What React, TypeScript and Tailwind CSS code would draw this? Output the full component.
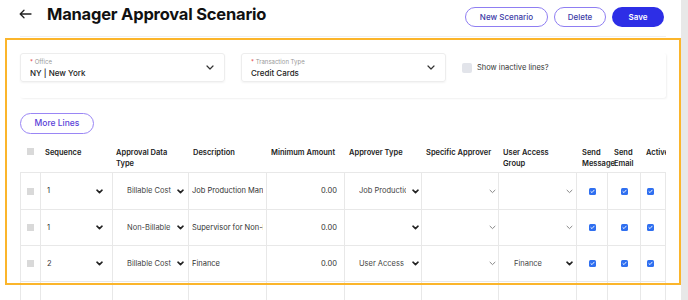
import React from "react";

const FONT = { fontFamily: 'Inter, "Noto Sans", Arial, sans-serif' };

function Chev({ bold = true }: { bold?: boolean }) {
  return bold ? (
    <svg width="7" height="5" viewBox="0 0 7 5" className="shrink-0">
      <path d="M1 1.2 L3.5 3.6 L6 1.2" fill="none" stroke="#222" strokeWidth="1.6" strokeLinecap="round" strokeLinejoin="round" />
    </svg>
  ) : (
    <svg width="7" height="5" viewBox="0 0 7 5" className="shrink-0">
      <path d="M1 1.2 L3.5 3.6 L6 1.2" fill="none" stroke="#888" strokeWidth="1" strokeLinecap="round" strokeLinejoin="round" />
    </svg>
  );
}

function SelChev() {
  return (
    <svg width="8" height="5" viewBox="0 0 8 5" className="shrink-0">
      <path d="M1 1 L4 4 L7 1" fill="none" stroke="#333" strokeWidth="1.2" strokeLinecap="round" strokeLinejoin="round" />
    </svg>
  );
}

function BlueCheck() {
  return (
    <span className="w-[7px] h-[7px] rounded-[1.5px] bg-[#2f6ff0] flex items-center justify-center">
      <svg width="5" height="5" viewBox="0 0 5 5">
        <path d="M0.9 2.6 L2 3.6 L4.1 1.2" fill="none" stroke="#fff" strokeWidth="0.9" strokeLinecap="round" />
      </svg>
    </span>
  );
}

const widths = [20, 72, 76, 78, 78, 77, 77, 78, 31, 33, 26];

type Row = {
  seq: string;
  adt: string;
  desc: string;
  appr: string;
  uag: string;
};

const rows: Row[] = [
  { seq: "1", adt: "Billable Cost", desc: "Job Production Manager", appr: "Job Production Manager", uag: "" },
  { seq: "1", adt: "Non-Billable", desc: "Supervisor for Non-Billable", appr: "", uag: "" },
  { seq: "2", adt: "Billable Cost", desc: "Finance", appr: "User Access Group", uag: "Finance" },
];

export default function App() {
  return (
    <div className="relative w-[688px] h-[300px] overflow-hidden flex bg-white text-[#222]" style={FONT}>
      <div className="flex-1 flex flex-col pl-[20px] pr-[15px]">
        {/* header */}
        <div className="h-[37px] shrink-0 flex items-start border-b border-[#f0f0f0]">
          <div className="flex items-center h-[28px]">
            <svg width="13" height="10" viewBox="0 0 13 10" className="ml-[-1px]">
              <path d="M12 5 H1.5 M5 1.2 L1.2 5 L5 8.8" fill="none" stroke="#222" strokeWidth="1.3" strokeLinecap="round" strokeLinejoin="round" />
            </svg>
            <h1 className="ml-[15px] text-[16.5px] font-bold tracking-[-0.2px] text-[#111]">Manager Approval Scenario</h1>
          </div>
          <div className="ml-auto mt-[7px] mr-[2px] flex gap-[6px]">
            <button className="h-[20px] w-[83px] rounded-full border border-[#8f7ef2] text-[8px] font-medium text-[#3c3aa6]">New Scenario</button>
            <button className="h-[20px] w-[52px] rounded-full border border-[#8f7ef2] text-[8px] font-medium text-[#3c3aa6]">Delete</button>
            <button className="h-[20px] w-[52px] rounded-full bg-[#2d2ee6] text-[8px] font-semibold text-white">Save</button>
          </div>
        </div>

        {/* filter card */}
        <div className="mt-[16px] h-[45px] shrink-0 rounded-[3px] shadow-[1px_1px_2px_rgba(0,0,0,0.06)] flex items-start gap-[16px]">
          <div className="w-[205px] h-[29px] rounded-[3px] border border-[#ededed] shadow-[0_1px_2px_rgba(0,0,0,0.05)] flex items-center pl-[9px] pr-[10px]">
            <div className="flex-1 flex flex-col leading-none">
              <span className="text-[6px] text-[#999]"><span className="text-[#e53935]">*</span> Office</span>
              <span className="mt-[4px] text-[8px] font-medium text-[#222]">NY | New York</span>
            </div>
            <SelChev />
          </div>
          <div className="w-[205px] h-[29px] rounded-[3px] border border-[#ededed] shadow-[0_1px_2px_rgba(0,0,0,0.05)] flex items-center pl-[9px] pr-[10px]">
            <div className="flex-1 flex flex-col leading-none">
              <span className="text-[6px] text-[#999]"><span className="text-[#e53935]">*</span> Transaction Type</span>
              <span className="mt-[4px] text-[8px] font-medium text-[#222]">Credit Cards</span>
            </div>
            <SelChev />
          </div>
          <div className="flex items-center h-[29px]">
            <span className="w-[10px] h-[10px] rounded-[2px] bg-[#e2e4ea]" />
            <span className="ml-[5px] text-[7.5px] text-[#333]">Show inactive lines?</span>
          </div>
        </div>

        {/* more lines */}
        <div className="mt-[15px] shrink-0 flex">
          <button className="h-[21px] w-[74px] rounded-full border border-[#9a86f5] text-[8.5px] font-medium text-[#5a3fd8]">More Lines</button>
        </div>

        {/* table */}
        <div className="mt-[9px] w-[646px] overflow-hidden">
          <div className="w-[700px]">
            <div className="flex h-[30px] text-[7.5px] font-semibold leading-[10.5px] text-[#222] border-b border-[#e8e8e8]">
              <div style={{ width: widths[0] }} className="shrink-0 pt-[5px] pl-[7px]">
                <span className="block w-[7px] h-[7px] bg-[#d9d9d9]" />
              </div>
              <div style={{ width: widths[1] }} className="shrink-0 pt-[5px] pl-[5px]">Sequence</div>
              <div style={{ width: widths[2] }} className="shrink-0 pt-[5px] pl-[4px] pr-[12px]">Approval Data Type</div>
              <div style={{ width: widths[3] }} className="shrink-0 pt-[5px] pl-[5px]">Description</div>
              <div style={{ width: widths[4] }} className="shrink-0 pt-[5px] pl-[5px]">Minimum Amount</div>
              <div style={{ width: widths[5] }} className="shrink-0 pt-[5px] pl-[5px]">Approver Type</div>
              <div style={{ width: widths[6] }} className="shrink-0 pt-[5px] pl-[5px]">Specific Approver</div>
              <div style={{ width: widths[7] }} className="shrink-0 pt-[5px] pl-[5px] pr-[20px]">User Access Group</div>
              <div style={{ width: widths[8] }} className="shrink-0 pt-[5px] pl-[6px]">Send Message</div>
              <div style={{ width: widths[9] }} className="shrink-0 pt-[5px] pl-[7px]">Send Email</div>
              <div style={{ width: widths[10] }} className="shrink-0 pt-[5px] pl-[6px] whitespace-nowrap">Active</div>
            </div>
            {rows.map((r, i) => (
              <div key={i} className={`flex ${i === 0 ? "h-[37px]" : "h-[36px]"} border-b border-[#e8e8e8] text-[7.5px] text-[#333]`}>
                <div style={{ width: widths[0] }} className="shrink-0 border-l border-[#e8e8e8] flex items-center pl-[6px]">
                  <span className="w-[7px] h-[7px] bg-[#d9d9d9]" />
                </div>
                <div style={{ width: widths[1] }} className="shrink-0 border-l border-[#e8e8e8] flex items-center pl-[6px] pr-[9px]">
                  <span className="flex-1">{r.seq}</span>
                  <Chev />
                </div>
                <div style={{ width: widths[2] }} className="shrink-0 border-l border-[#e8e8e8] flex items-center pl-[14px] pr-[4px]">
                  <span className="flex-1 overflow-hidden whitespace-nowrap text-[#444]">{r.adt}</span>
                  <Chev />
                </div>
                <div style={{ width: widths[3] }} className="shrink-0 border-l border-[#e8e8e8] flex items-center pl-[3px] pr-[3px]">
                  <span className="flex-1 overflow-hidden whitespace-nowrap">{r.desc}</span>
                </div>
                <div style={{ width: widths[4] }} className="shrink-0 border-l border-[#e8e8e8] flex items-center justify-end pr-[7px]">
                  0.00
                </div>
                <div style={{ width: widths[5] }} className="shrink-0 border-l border-[#e8e8e8] flex items-center pl-[14px] pr-[2px]">
                  <span className="flex-1 overflow-hidden whitespace-nowrap text-[#444] mr-[6px]">{r.appr}</span>
                  <Chev />
                </div>
                <div style={{ width: widths[6] }} className="shrink-0 border-l border-[#e8e8e8] flex items-center justify-end pr-[2px]">
                  <Chev bold={false} />
                </div>
                <div style={{ width: widths[7] }} className="shrink-0 border-l border-[#e8e8e8] flex items-center pl-[15px] pr-[3px]">
                  <span className="flex-1 overflow-hidden whitespace-nowrap text-[#444]">{r.uag}</span>
                  <Chev bold={r.uag !== ""} />
                </div>
                <div style={{ width: widths[8] }} className="shrink-0 border-l border-[#e8e8e8] flex items-center justify-center">
                  <BlueCheck />
                </div>
                <div style={{ width: widths[9] }} className="shrink-0 border-l border-[#e8e8e8] flex items-center justify-center">
                  <BlueCheck />
                </div>
                <div style={{ width: widths[10] }} className="shrink-0 border-l border-r border-[#e8e8e8] flex items-center pl-[6px]">
                  <BlueCheck />
                </div>
              </div>
            ))}
            <div className="flex h-[36px]">
              {widths.map((w, j) => (
                <div key={j} style={{ width: w }} className={`shrink-0 border-l border-[#e8e8e8] ${j === widths.length - 1 ? "border-r" : ""}`} />
              ))}
            </div>
          </div>
        </div>
      </div>
      <div className="w-[7px] shrink-0 bg-[#e8e8e8]" />

      {/* highlight frame */}
      <div className="absolute left-[5px] top-[38px] w-[676px] h-[247px] border-2 border-[#fbb52b] pointer-events-none" />
    </div>
  );
}
